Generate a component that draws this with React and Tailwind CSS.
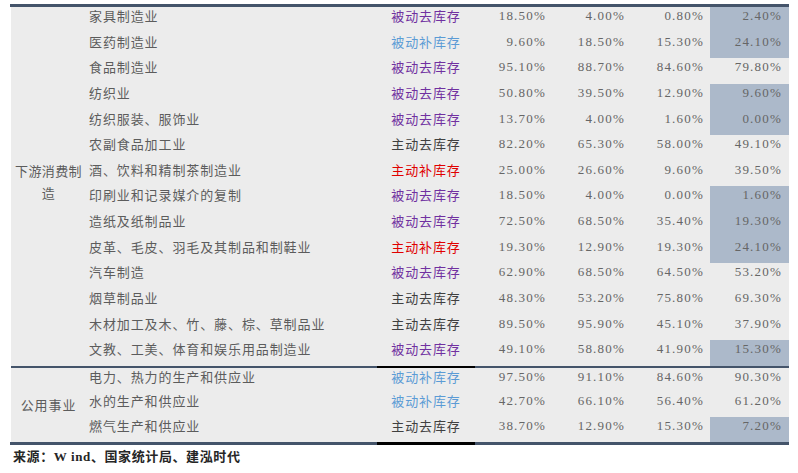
import React from "react";

const cjk = "font-['Noto_Sans_CJK_SC','Noto_Sans',sans-serif]";
const serif = "font-['Liberation_Serif','Times_New_Roman',serif]";

const statusColor = {
  被动去库存: "text-[#7030a0]",
  被动补库存: "text-[#5b9bd5]",
  主动去库存: "text-[#404040]",
  主动补库存: "text-[#e00000]",
};

const downstream = [
  ["家具制造业", "被动去库存", "18.50%", "4.00%", "0.80%", "2.40%", true],
  ["医药制造业", "被动补库存", "9.60%", "18.50%", "15.30%", "24.10%", true],
  ["食品制造业", "被动去库存", "95.10%", "88.70%", "84.60%", "79.80%", false],
  ["纺织业", "被动去库存", "50.80%", "39.50%", "12.90%", "9.60%", true],
  ["纺织服装、服饰业", "被动去库存", "13.70%", "4.00%", "1.60%", "0.00%", true],
  ["农副食品加工业", "主动去库存", "82.20%", "65.30%", "58.00%", "49.10%", false],
  ["酒、饮料和精制茶制造业", "主动补库存", "25.00%", "26.60%", "9.60%", "39.50%", false],
  ["印刷业和记录媒介的复制", "被动去库存", "18.50%", "4.00%", "0.00%", "1.60%", true],
  ["造纸及纸制品业", "被动去库存", "72.50%", "68.50%", "35.40%", "19.30%", true],
  ["皮革、毛皮、羽毛及其制品和制鞋业", "主动补库存", "19.30%", "12.90%", "19.30%", "24.10%", true],
  ["汽车制造", "被动去库存", "62.90%", "68.50%", "64.50%", "53.20%", false],
  ["烟草制品业", "主动去库存", "48.30%", "53.20%", "75.80%", "69.30%", false],
  ["木材加工及木、竹、藤、棕、草制品业", "主动去库存", "89.50%", "95.90%", "45.10%", "37.90%", false],
  ["文教、工美、体育和娱乐用品制造业", "被动去库存", "49.10%", "58.80%", "41.90%", "15.30%", true],
];

const utilities = [
  ["电力、热力的生产和供应业", "被动补库存", "97.50%", "91.10%", "84.60%", "90.30%", false],
  ["水的生产和供应业", "被动补库存", "42.70%", "66.10%", "56.40%", "61.20%", false],
  ["燃气生产和供应业", "主动去库存", "38.70%", "12.90%", "15.30%", "7.20%", true],
];

function Row({ row, height }) {
  const [name, status, a, b, c, d, hl] = row;
  return (
    <div className={`grid grid-cols-[291px_98px_77px_79px_79px_79px] ${height}`}>
      <div className={`${cjk} text-[13px] leading-[18px] tracking-[0.9px] text-[#5c5c5c] pl-[3px] whitespace-nowrap`}>
        {name}
      </div>
      <div className={`${cjk} text-[13px] leading-[18px] tracking-[0.9px] text-center ${statusColor[status]}`}>
        {status}
      </div>
      {[a, b, c].map((v, i) => (
        <div key={i} className={`${serif} text-[13px] leading-[18px] tracking-[1.2px] text-right pr-[6px] text-[#666666]`}>
          {v}
        </div>
      ))}
      <div
        className={`${serif} text-[13px] leading-[18px] tracking-[1.2px] text-right pr-[7px] text-[#666666] ${
          hl ? "bg-[#acb9ca]" : ""
        }`}
      >
        {d}
      </div>
    </div>
  );
}

export default function App() {
  return (
    <div className="w-[798px] h-[473px] bg-white pt-[4px]">
      <div className="ml-[10px] w-[779px] h-[3px] bg-[#44546a]" />
      <div className="ml-[11px] w-[778px] bg-[#ececec]">
        <div className="flex">
          <div className={`w-[75px] flex items-center justify-center px-[2px] text-center ${cjk} text-[13px] leading-[22px] tracking-[0.4px] text-[#5c5c5c] pb-[8px]`}>
            下游消费制造
          </div>
          <div className="flex flex-col">
            {downstream.map((r) => (
              <Row key={r[0]} row={r} height="h-[25.64px]" />
            ))}
          </div>
        </div>
        <div className="flex h-[2px]">
          <div className="w-[366px] bg-[#44546a]" />
          <div className="w-[98px] bg-black" />
          <div className="flex-1 bg-[#44546a]" />
        </div>
        <div className="flex">
          <div className={`w-[75px] flex items-center justify-center ${cjk} text-[13px] tracking-[0.9px] text-[#5c5c5c]`}>
            公用事业
          </div>
          <div className="flex flex-col">
            {utilities.map((r) => (
              <Row key={r[0]} row={r} height="h-[24.67px]" />
            ))}
          </div>
        </div>
      </div>
      <div className="ml-[10px] w-[779px] flex h-[3px]">
        <div className="w-[367px] bg-[#44546a]" />
        <div className="w-[98px] bg-black" />
        <div className="flex-1 bg-[#44546a]" />
      </div>
      <div className={`ml-[13px] mt-[1px] ${cjk} font-bold text-[13px] leading-[20px] tracking-[0.6px] text-[#262626]`}>
        来源：<span className={serif}>W ind</span>、国家统计局、建泓时代
      </div>
    </div>
  );
}
